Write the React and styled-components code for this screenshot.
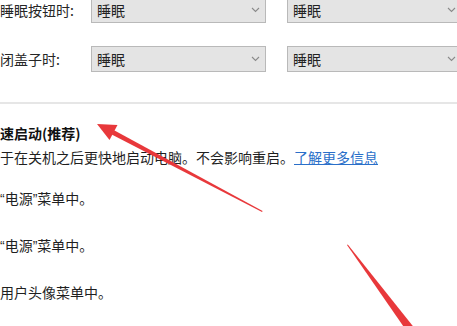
import React from "react";
import styled, { createGlobalStyle } from "styled-components";

const GlobalStyle = createGlobalStyle`
  html, body {
    margin: 0;
    padding: 0;
    background: #fff;
    overflow: hidden;
  }
  body {
    font-family: "Noto Sans CJK SC", "Noto Sans", sans-serif;
    color: #1a1a1a;
  }
`;

const Page = styled.div`
  position: relative;
  width: 457px;
  height: 326px;
  overflow: hidden;
`;

const Form = styled.div`
  display: flex;
  flex-direction: column;
  gap: 23px;
  margin-top: -3px;
`;

const Row = styled.div`
  display: flex;
  align-items: center;
`;

const Label = styled.div`
  width: 91px;
  flex: none;
  font-size: 14px;
  line-height: 26px;
  color: #262626;
  white-space: nowrap;
`;

const Selects = styled.div`
  display: flex;
  gap: 21px;
`;

const Select = styled.div`
  display: flex;
  align-items: center;
  justify-content: space-between;
  box-sizing: border-box;
  width: 175px;
  flex: none;
  height: 26px;
  padding: 0 5px;
  background: #e4e4e4;
  border: 1px solid #b9b9b9;
  font-size: 14px;
  color: #222;
`;

const Chevron = () => (
  <svg width="9" height="6" viewBox="0 0 9 6">
    <path d="M1 1 L4.5 4.5 L8 1" fill="none" stroke="#8a8a8a" strokeWidth="1.1" />
  </svg>
);

const Divider = styled.div`
  height: 2px;
  background: #e6e6e6;
  margin-top: 30px;
`;

const Section = styled.div`
  padding-top: 19px;
`;

const Title = styled.div`
  font-size: 14px;
  font-weight: 700;
  line-height: 20px;
  color: #111;
`;

const Desc = styled.div`
  font-size: 14px;
  line-height: 20px;
  margin-top: 4px;
  white-space: nowrap;
  color: #1f1f1f;
`;

const Link = styled.a`
  color: #2a6fc9;
  text-decoration: underline;
`;

const List = styled.div`
  display: flex;
  flex-direction: column;
  gap: 26px;
  margin-top: 21px;
`;

const Item = styled.div`
  font-size: 14px;
  line-height: 20px;
  color: #1f1f1f;
  white-space: nowrap;
`;

const Quote = styled.span`
  font-family: "Liberation Sans", sans-serif;
`;

const Overlay = styled.svg`
  position: absolute;
  left: 0;
  top: 0;
  pointer-events: none;
`;

const rows = ["睡眠按钮时:", "闭盖子时:"];

export default function App() {
  return (
    <Page>
      <GlobalStyle />
      <Form>
        {rows.map(label => (
          <Row key={label}>
            <Label>{label}</Label>
            <Selects>
              <Select>
                睡眠
                <Chevron />
              </Select>
              <Select>
                睡眠
                <Chevron />
              </Select>
            </Selects>
          </Row>
        ))}
      </Form>
      <Divider />
      <Section>
        <Title>速启动(推荐)</Title>
        <Desc>
          于在关机之后更快地启动电脑。不会影响重启。<Link href="#">了解更多信息</Link>
        </Desc>
      </Section>
      <List>
        <Item>
          <Quote>“</Quote>电源<Quote>”</Quote>菜单中。
        </Item>
        <Item>
          <Quote>“</Quote>电源<Quote>”</Quote>菜单中。
        </Item>
        <Item>用户头像菜单中。</Item>
      </List>
      <Overlay width="457" height="326" viewBox="0 0 457 326">
        <defs>
          <filter id="soft" x="-10%" y="-10%" width="120%" height="120%">
            <feGaussianBlur stdDeviation="0.4" />
          </filter>
        </defs>
        <g filter="url(#soft)" fill="#e8393b">
          <polygon points="262,212 262.6,211 114.1,130.2 111.7,134.6" />
          <polygon points="97,124 117.5,125 109.5,140" />
          <polygon points="347,245 347.8,244.4 416,330 408,333" />
        </g>
      </Overlay>
    </Page>
  );
}
